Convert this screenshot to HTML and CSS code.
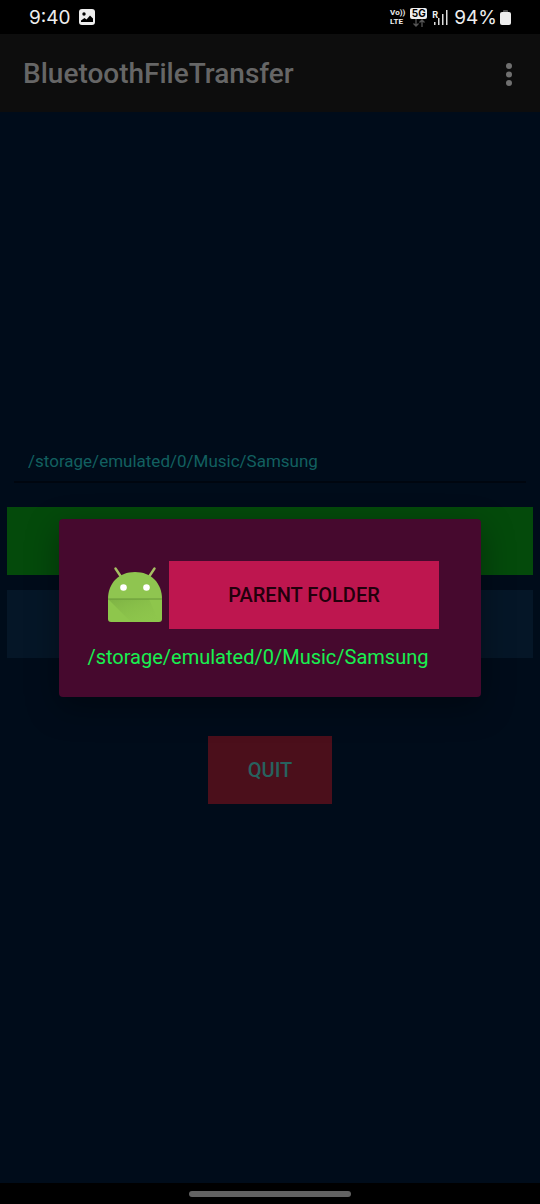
FILE: index.html
```html
<!DOCTYPE html>
<html lang="en">
<head>
<meta charset="utf-8">
<meta name="viewport" content="width=device-width, initial-scale=1">
<title>BluetoothFileTransfer</title>
<link rel="stylesheet" href="styles.css">
</head>
<body>
<div class="screen">
  <header class="status">
    <span class="clock">9:40</span>
    <svg class="photo" width="16" height="16" viewBox="0 0 16 16" aria-hidden="true"><rect width="16" height="16" rx="3" fill="#eee"/><circle cx="5" cy="5" r="1.700" fill="#000"/><path d="M2 13V11.500L5.500 9 7.500 10.500 11 6.500 14 9.500V13Z" fill="#000"/></svg>
    <span class="volte"><span>Vo))</span><span>LTE</span></span>
    <span class="network"><span class="badge">5G</span>
      <svg width="14" height="8" viewBox="0 0 14 8" fill="none" stroke="#555" stroke-width="1.300" aria-hidden="true"><path d="M4 0V7M1.500 4.500 4 7 6.500 4.500M10 8V1M7.500 3.500 10 1 12.500 3.500"/></svg>
    </span>
    <span class="roaming"><span class="r">R</span>
      <svg width="14" height="15" viewBox="0 0 14 15" aria-hidden="true"><path d="M0 12h1.500v3H0zM4 8h1.500v7H4zM8 4h1.500v11H8zM12 0h1.500v15h-1.500z" fill="#ddd"/></svg>
    </span>
    <span class="percent">94%</span>
    <svg class="battery" width="11" height="15" viewBox="0 0 11 15" aria-hidden="true"><path d="M3 2V1Q3 0 4 0H7Q8 0 8 1V2Z" fill="#555"/><rect y="2" width="11" height="13" rx="2" fill="#eee"/></svg>
  </header>

  <div class="appbar">
    <h1 class="title">BluetoothFileTransfer</h1>
    <button class="more" type="button" aria-label="More options">
      <svg width="6" height="23" viewBox="0 0 6 23" fill="#707070" aria-hidden="true"><circle cx="3" cy="3" r="3"/><circle cx="3" cy="11.500" r="3"/><circle cx="3" cy="20" r="3"/></svg>
    </button>
  </div>

  <main class="content">
    <input class="path-field" type="text" aria-label="File path" value="/storage/emulated/0/Music/Samsung">
    <button class="action send" type="button" aria-label="Send"></button>
    <button class="action browse" type="button" aria-label="Browse"></button>
    <button class="action quit" type="button">QUIT</button>
  </main>

  <footer class="nav"><span class="handle"></span></footer>

  <div class="overlay">
    <section class="dialog" role="dialog" aria-label="Choose a file">
      <div class="row">
        <svg class="droid" width="56" height="56" viewBox="0 1 56 56" aria-hidden="true">
          <defs><linearGradient id="shade" x1="0" y1="0" x2="1" y2="1"><stop offset="0" stop-color="#5f8d35" stop-opacity=".6"/><stop offset="1" stop-color="#8bc34a" stop-opacity="0"/></linearGradient></defs>
          <path d="M8.500 2.500 13.500 10M47.500 2.500 42.500 10" stroke="#a6bf63" stroke-width="2.400" stroke-linecap="round"/>
          <path d="M1 33C1 17 12 6 28 6S55 17 55 33Z" fill="#8fc550"/>
          <path d="M1 33H55V53Q55 56 52 56H4Q1 56 1 53Z" fill="#8ec64c"/>
          <path d="M1 33H42L52 56H24Z" fill="url(#shade)" opacity=".6"/>
          <path d="M1 33H55" stroke="#669638" stroke-width="1"/>
          <circle cx="16.500" cy="21.500" r="3.300" fill="#fff"/><circle cx="39.500" cy="21.500" r="3.300" fill="#fff"/>
        </svg>
        <button class="parent" type="button">PARENT FOLDER</button>
      </div>
      <p class="current">/storage/emulated/0/Music/Samsung</p>
    </section>
  </div>
</div>
</body>
</html>
```
FILE: styles.css
```css
* { box-sizing: border-box; }

body {
  margin: 0;
  background: #000;
  font-family: Roboto, "Liberation Sans", sans-serif;
}

button, input {
  font: inherit;
  border: 0;
  border-radius: 0;
  padding: 0;
  background: none;
}

.screen {
  position: relative;
  display: flex;
  flex-direction: column;
  min-height: 100vh;
}

.status {
  display: flex;
  align-items: center;
  height: 34px;
  padding: 0 29px;
  color: #eee;
  font-family: Inter, Roboto, sans-serif;
  font-size: 19px;
}

.photo { margin: 0 auto 0 8px; }

.volte {
  display: flex;
  flex-direction: column;
  font-family: Roboto, sans-serif;
  font-size: 8px;
  font-weight: 700;
  line-height: 9px;
}

.network {
  display: flex;
  flex-direction: column;
  align-items: center;
  margin-left: 5px;
}

.badge {
  width: 17px;
  border-radius: 2px;
  background: #eee;
  color: #000;
  font-size: 10px;
  font-weight: 700;
  line-height: 11px;
  text-align: center;
}

.roaming {
  display: flex;
  align-items: flex-end;
  margin: 0 6px 0 5px;
}

.r {
  align-self: flex-start;
  width: 2px;
  font-size: 9px;
  font-weight: 700;
  line-height: 9px;
}

.battery { margin-left: 3px; }

.appbar {
  display: flex;
  align-items: center;
  justify-content: space-between;
  height: 78px;
  padding: 2px 20px 0 23px;
  background: #0d0d0d;
}

.title {
  margin: 0;
  color: #666;
  font-size: 28px;
  font-weight: 500;
  line-height: 36px;
}

.more {
  display: grid;
  place-items: center;
  width: 24px;
  height: 48px;
  margin-right: -1px;
}

.content {
  flex: 1;
  display: flex;
  flex-direction: column;
  padding: 328px 7px 0;
  background: #000c1a;
}

.path-field {
  height: 43px;
  margin: 0 7px;
  padding: 0 14px;
  border-bottom: 2px solid #00060f;
  color: #126060;
  font-size: 17px;
}

.action {
  height: 68px;
  font-size: 20px;
  font-weight: 500;
}

.send {
  margin-top: 24px;
  background: #044a0b;
}

.browse {
  margin-top: 15px;
  background: #051627;
}

.quit {
  align-self: center;
  width: 124px;
  margin-top: 78px;
  background: #4b0f1b;
  color: #27625f;
}

.nav {
  display: grid;
  place-items: center;
  height: 21px;
}

.handle {
  width: 30%;
  height: 6px;
  border-radius: 3px;
  background: #636363;
}

.overlay {
  position: absolute;
  inset: 34px 0 22px;
  display: grid;
  place-items: center;
}

.dialog {
  width: 78%;
  padding: 42px 42px 27px 28px;
  border-radius: 4px;
  background: #46092e;
  box-shadow: 0 10px 32px rgba(0, 0, 0, 0.35);
}

.row {
  display: flex;
  align-items: center;
  gap: 6px;
  padding-left: 20px;
}

.droid { flex: none; }

.parent {
  flex: 1;
  height: 68px;
  background: #be164f;
  color: #22000c;
  font-size: 20px;
  font-weight: 500;
}

.current {
  margin: 15px 0 0;
  color: #18f050;
  font-size: 20px;
  line-height: 26px;
}
```
